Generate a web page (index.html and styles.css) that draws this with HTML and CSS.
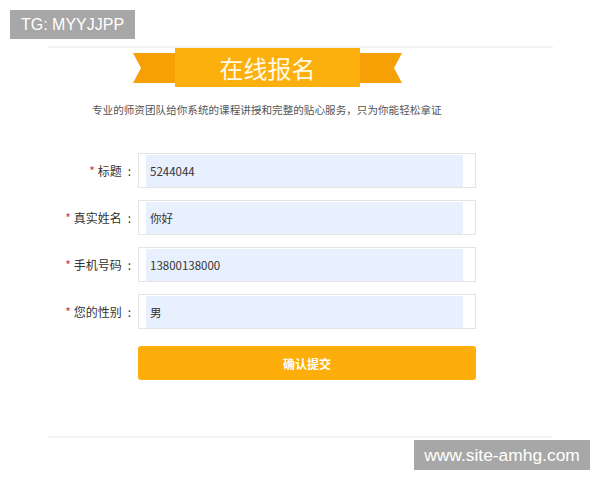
FILE: index.html
```html
<!DOCTYPE html>
<html lang="zh-CN">
<head>
  <meta charset="UTF-8">
  <title>在线报名</title>
  <meta name="viewport" content="width=device-width, initial-scale=1.0">
  <link rel="stylesheet" href="styles.css">
</head>
<body>
  <div class="tg">TG: MYYJJPP</div>

  <div class="wrap">
    <div class="ribbon">
      <svg class="tail" width="42" height="30" viewBox="0 0 42 30">
        <polygon points="0,0 42,0 42,30 0,30 8,15" fill="#f6a006"/>
      </svg>
      <div class="ribbon-box">在线报名</div>
      <svg class="tail" width="42" height="30" viewBox="0 0 42 30">
        <polygon points="0,0 42,0 34,15 42,30 0,30" fill="#f6a006"/>
      </svg>
    </div>

    <p class="intro">专业的师资团队给你系统的课程讲授和完整的贴心服务，只为你能轻松拿证</p>

    <form class="form">
      <div class="row">
        <label><span class="star">*</span> 标题<span class="colon">:</span></label>
        <div class="field"><input type="text" value="5244044"></div>
      </div>
      <div class="row">
        <label><span class="star">*</span> 真实姓名<span class="colon">:</span></label>
        <div class="field"><input type="text" value="你好"></div>
      </div>
      <div class="row">
        <label><span class="star">*</span> 手机号码<span class="colon">:</span></label>
        <div class="field"><input type="text" value="13800138000"></div>
      </div>
      <div class="row">
        <label><span class="star">*</span> 您的性别<span class="colon">:</span></label>
        <div class="field"><input type="text" value="男"></div>
      </div>
      <div class="row">
        <label></label>
        <button type="button" class="submit">确认提交</button>
      </div>
    </form>
  </div>

  <div class="site">www.site-amhg.com</div>
</body>
</html>
```

FILE: styles.css
```css
body {
  margin: 0;
  background: #fff;
  font-family: "Noto Sans CJK SC", "Liberation Sans", sans-serif;
  color: #333;
}
.tg, .site {
  position: absolute;
  background: #a7a7a7;
  color: #fff;
  font-family: "Liberation Sans", sans-serif;
  font-size: 16px;
  line-height: 30px;
  text-align: center;
}
.tg {
  left: 10px;
  top: 10px;
  width: 125px;
  height: 29px;
  line-height: 29px;
}
.site {
  left: 414px;
  top: 440px;
  width: 176px;
  height: 30px;
  font-size: 17.4px;
}
.wrap {
  margin: 46px 0 0 48px;
  width: 505px;
  border-top: 2px solid #f3f3f3;
  border-bottom: 2px solid #f3f3f3;
  height: 388px;
}
.ribbon {
  display: flex;
  align-items: center;
  margin-left: 85px;
}
.tail {
  display: block;
}
.ribbon-box {
  width: 185px;
  height: 39px;
  background: #fbb00e;
  color: #fff9e6;
  font-size: 24px;
  line-height: 39px;
  text-align: center;
}
.intro {
  margin: 16px 0 0 44px;
  font-size: 10.6px;
  line-height: 14px;
  color: #555;
}
.form {
  margin-top: 36px;
}
.row {
  display: flex;
  align-items: center;
  margin-bottom: 12px;
}
.row label {
  width: 83px;
  text-align: right;
  font-size: 12px;
  color: #333;
  margin-right: 7px;
}
.star {
  color: #d0393b;
}
.colon {
  margin-left: 6px;
}
.field {
  box-sizing: border-box;
  width: 338px;
  height: 35px;
  border: 1px solid #e4e4e4;
  padding: 1px 12px 0 7px;
  display: flex;
}
.field input {
  flex: 1;
  min-width: 0;
  border: none;
  margin: 0;
  padding: 0 0 0 4px;
  background: #e9f0fd;
  font-family: "Noto Sans CJK SC", sans-serif;
  font-size: 11.5px;
  color: #333;
  outline: none;
}
.submit {
  margin-top: 5px;
  width: 338px;
  height: 34px;
  border: none;
  border-radius: 3px;
  background: #fdae0b;
  color: #fff;
  font-family: "Noto Sans CJK SC", sans-serif;
  font-size: 12px;
  font-weight: bold;
  cursor: pointer;
}
```
